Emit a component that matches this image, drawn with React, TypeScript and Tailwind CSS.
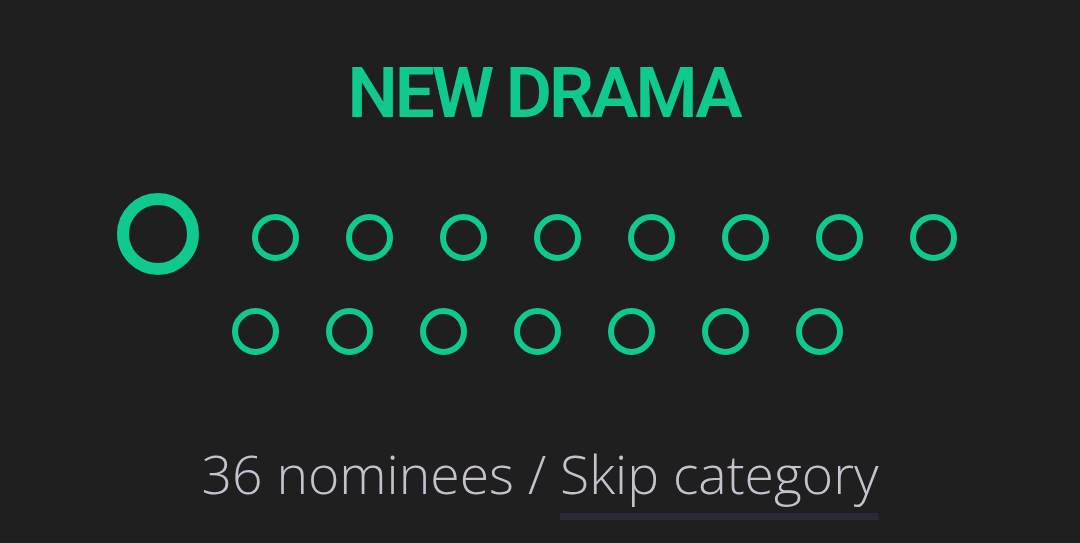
import React from 'react';

const SMALL_COUNT = 15;

function Ring({ big }: { big?: boolean }) {
  if (big) {
    return (
      <div className="w-[134px] h-[94px] flex items-center justify-center">
        <div className="w-[82px] h-[82px] mb-[7px] mr-[6px] rounded-full border-[12px] border-[#0fc98f]" />
      </div>
    );
  }
  return (
    <div className="w-[94px] h-[94px] flex items-center justify-center">
      <div className="w-[47px] h-[47px] rounded-full border-[6px] border-[#0fc98f]" />
    </div>
  );
}

export default function App() {
  return (
    <div className="w-full min-h-[543px] bg-[#1f1f1f] flex flex-col items-center overflow-hidden">
      <h1
        className="mt-[51px] text-[71px] leading-[84px] font-semibold text-[#0fc98f] tracking-[-3px] pl-[7px]"
        style={{ fontFamily: 'Roboto, sans-serif' }}
      >
        NEW DRAMA
      </h1>
      <div className="w-full flex justify-center pr-[6px] mt-[55px]">
        <div className="w-[900px] flex flex-wrap justify-center">
          <Ring big />
          {Array.from({ length: SMALL_COUNT }).map((_, i) => (
            <Ring key={i} />
          ))}
        </div>
      </div>
      <div
        className="mt-[64px] text-[53.5px] leading-[64px] font-light text-[#c6c1cd]"
        style={{ fontFamily: '"Open Sans", sans-serif' }}
      >
        36 nominees /{' '}
        <span className="underline decoration-[#2d2838] decoration-[7px] underline-offset-[19px]">
          Skip category
        </span>
      </div>
    </div>
  );
}
